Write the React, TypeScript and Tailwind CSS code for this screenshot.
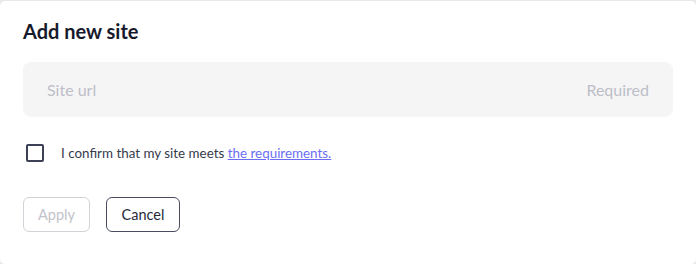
export default function App() {
  return (
    <div className="h-[264px] w-[696px] bg-[#e9e9ec] pt-px" style={{ fontFamily: "Lato, 'Noto Sans', sans-serif" }}>
      <div className="h-[263px] rounded-[5px] bg-white px-[23px] pt-[16px]">
        <h2 className="text-[20px] font-bold leading-[29px] text-[#171a2c]">Add new site</h2>

        <div className="mt-[16px] flex h-[55px] items-center justify-between rounded-[8px] bg-[#f5f5f6] px-[24px] text-[16px] text-[#bdbec7]">
          <input
            className="flex-1 bg-transparent outline-none placeholder-[#bdbec7]"
            placeholder="Site url"
            type="text"
          />
          <span>Required</span>
        </div>

        <label className="mt-[26px] flex items-center gap-[17px] pl-[3px] text-[13.4px] text-[#363a4c]">
          <span className="h-[18px] w-[18px] rounded-[2px] border-2 border-[#3d4156]"></span>
          <span>
            I confirm that my site meets{" "}
            <a href="#" className="text-[#6b6ef5] underline">
              the requirements.
            </a>
          </span>
        </label>

        <div className="mt-[34px] flex gap-[16px]">
          <button className="h-[35px] w-[67px] rounded-[6px] border border-[#d2d3d8] text-[14.5px] text-[#c2c3ca]" disabled>
            Apply
          </button>
          <button className="h-[35px] w-[74px] rounded-[6px] border border-[#4a4d60] text-[14.5px] text-[#262a3c]">
            Cancel
          </button>
        </div>
      </div>
    </div>
  );
}
